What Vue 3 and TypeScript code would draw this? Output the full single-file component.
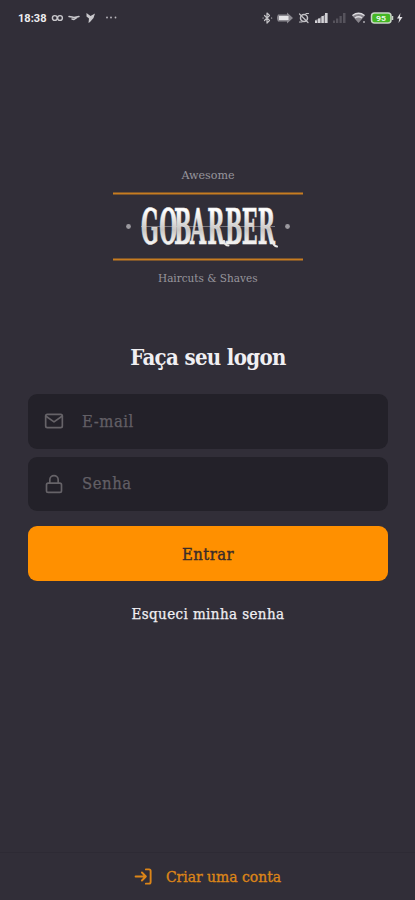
<script setup lang="ts">
import { ref } from 'vue'

const email = ref<string>('')
const password = ref<string>('')
</script>

<template>
  <div class="screen">
    <header class="status">
      <svg width="415" height="36" viewBox="0 0 415 36" aria-hidden="true">
        <text class="clock" x="18" y="22" textLength="28.5" lengthAdjust="spacingAndGlyphs">18:38</text>
        <g fill="none" stroke="#c9c8cc" stroke-width="1.4" stroke-linecap="round" stroke-linejoin="round">
          <circle cx="54.800" cy="18" r="2.400" /><circle cx="60" cy="18" r="2.400" />
          <path d="M69 16.500l3 .5 2 .5 5-1M72 19l2 .5 3-2" stroke-width="1.500" />
        </g>
        <path d="M86.500 13l4 3 4.500-2.500-1.500 4.500-3.500 4-1.500 1 .5-4.500-2.500-2z" fill="#c9c8cc" />
        <g fill="#bbb9be"><circle cx="107" cy="17.500" r=".9" /><circle cx="111" cy="17.500" r=".9" /><circle cx="115.500" cy="17.500" r=".9" /></g>
        <g fill="none" stroke="#c3c2c6" stroke-width="1.200" stroke-linecap="round" stroke-linejoin="round">
          <path d="M264.500 15.500l5 5-2.500 2.500V13l2.500 2.500-5 5M263 18h.2M271.500 18h.2" />
          <circle cx="304" cy="18" r="3.500" stroke-width="1.500" />
          <path d="M299.500 14l8.500 8.500M299.500 22h2.500M306 13.500h2.500" />
        </g>
        <path d="M278 14.500h9v-2l6 5.500-6 5.500v-2h-9q-2-3.500 0-7z" fill="#8b8990" />
        <path d="M279 16h9.500v4H279z" fill="#e4e3e6" />
        <path d="M315 23v-3l3-1 9.500-6v10z" fill="#77747d" />
        <path d="M315 20.500h2V23h-2zM318 18.500h2.300V23H318zM321.500 16h2.300v7h-2.300zM325 13h2.500v10H325z" fill="#d2d1d5" />
        <path d="M333 20.500h2V23h-2zM336 18.500h2.300V23H336zM339.500 16h2.300v7h-2.300zM343 13h2.500v10H343z" fill="#56535c" />
        <path d="M352 15.500q6.500-5 13 0L358.500 23z" fill="#88858c" />
        <path d="M352.500 15.500q6-4.500 12 0M355 18q3.500-2.500 7 0" fill="none" stroke="#dddce0" stroke-width="1.300" />
        <circle cx="364" cy="22" r="1" fill="#aaa8ae" />
        <rect x="371.500" y="13" width="19.500" height="10" rx="3" fill="#44b724" stroke="#c8d5c5" stroke-width="1.500" />
        <path d="M392.500 16v4" stroke="#c8d5c5" stroke-width="1.500" />
        <text class="charge" x="376" y="21" textLength="10" lengthAdjust="spacingAndGlyphs">95</text>
        <path d="M400.500 13l-3.500 5.500h2.300L398.500 23l4-6h-2.600z" fill="#e0dfe2" />
      </svg>
    </header>

    <main>
      <svg class="logo" width="190" height="122" viewBox="0 0 190 122" role="img" aria-label="GoBarber">
        <defs>
          <linearGradient id="silver" x1="0" y1="0" x2="0" y2="1">
            <stop offset="0.2" stop-color="#fff" />
            <stop offset=".55" stop-color="#c9c6c4" />
            <stop offset=".8" stop-color="#f6f5f4" />
          </linearGradient>
        </defs>
        <text class="tag" x="68.500" y="13" textLength="53" lengthAdjust="spacingAndGlyphs">Awesome</text>
        <path d="M0 27.500h190M0 93.500h190" stroke="#c77c20" stroke-width="2" />
        <circle cx="15.500" cy="60.500" r="2.400" fill="#9b999f" />
        <circle cx="174.500" cy="60.500" r="2.400" fill="#9b999f" />
        <path d="M28 60.500h134" stroke="#8f8c90" stroke-width=".8" />
        <text class="brand" transform="translate(28 77.500) scale(.48 1)" x="0 38 69 102 138 175 210 243">GOBARBER</text>
        <path d="M111 75q1 4.500 4.500 4.500M159.500 75q1 5 4.500 5.500" fill="none" stroke="#e9e8e7" stroke-width="2" stroke-linecap="round" />
        <text class="tag" x="45" y="116" textLength="99.500" lengthAdjust="spacingAndGlyphs">Haircuts &amp; Shaves</text>
      </svg>

      <h1>Faça seu logon</h1>

      <form @submit.prevent>
        <label class="field">
          <svg width="20" height="20" viewBox="0 0 24 24" class="icon">
            <path d="M4 4h16a2 2 0 0 1 2 2v12a2 2 0 0 1-2 2H4a2 2 0 0 1-2-2V6a2 2 0 0 1 2-2z" />
            <path d="M22 6l-10 7L2 6" />
          </svg>
          <input v-model="email" class="email" type="email" placeholder="E-mail" />
        </label>
        <label class="field">
          <svg width="20" height="20" viewBox="0 0 24 24" class="icon">
            <rect x="3" y="11" width="18" height="11" rx="2" />
            <path d="M7 11V7a5 5 0 0 1 10 0v4" />
          </svg>
          <input v-model="password" class="password" type="password" placeholder="Senha" />
        </label>
        <button class="enter" type="submit">Entrar</button>
      </form>

      <a class="forgot"><span>Esqueci minha senha</span></a>
    </main>

    <footer>
      <svg width="19" height="19" viewBox="0 0 24 24" class="icon login">
        <path d="M15 3h4a2 2 0 0 1 2 2v14a2 2 0 0 1-2 2h-4M10 17l5-5-5-5M15 12H2" />
      </svg>
      <span>Criar uma conta</span>
    </footer>
  </div>
</template>

<style>
body {
  background: #312e38;
}
</style>

<style scoped>
.screen {
  box-sizing: border-box;
  width: 415px;
  height: 900px;
  display: flex;
  flex-direction: column;
  overflow: hidden;
  background: #312e38;
  color: #f0eff2;
  font-family: "Roboto Slab", "DejaVu Serif Condensed", "DejaVu Serif", serif;
  font-stretch: condensed;
}
.status {
  height: 36px;
}
.status svg {
  display: block;
}
.clock {
  font: bold 11.5px Roboto, sans-serif;
  fill: #eeedf0;
}
.charge {
  font: bold 8px Roboto, sans-serif;
  fill: #e8f6e5;
}
main {
  flex: 1;
  display: flex;
  flex-direction: column;
  align-items: center;
  padding: 130px 27px 0 28px;
}
.logo {
  display: block;
  overflow: visible;
}
.tag {
  font-size: 11px;
  fill: #98969d;
}
.brand {
  font-size: 48px;
  font-weight: bold;
  fill: url(#silver);
  stroke: #eeedec;
  stroke-width: 0.5px;
}
h1 {
  margin: 52px 0 20px;
  height: 34px;
  line-height: 34px;
  font-size: 22px;
  font-weight: bold;
  letter-spacing: -0.64px;
  white-space: nowrap;
}
form {
  width: 100%;
  display: flex;
  flex-direction: column;
}
.field {
  height: 54.5px;
  margin-bottom: 8px;
  padding: 0 16px;
  display: flex;
  align-items: center;
  gap: 18px;
  box-sizing: border-box;
  border-radius: 9px;
  background: #232129;
}
.icon {
  flex: none;
  fill: none;
  stroke: #666368;
  stroke-width: 2;
  stroke-linecap: round;
  stroke-linejoin: round;
}
input {
  flex: 1;
  min-width: 0;
  padding: 0;
  border: 0;
  outline: 0;
  background: none;
  color: #f4ede8;
  font: inherit;
  font-size: 16.5px;
  letter-spacing: 0.55px;
}
input::placeholder {
  color: #625f65;
  opacity: 1;
  -webkit-text-stroke: 0.25px #625f65;
}
.enter {
  height: 55px;
  margin-top: 7px;
  padding-top: 3px;
  border: 0;
  border-radius: 9px;
  background: #ff9000;
  color: #3b2c29;
  font: inherit;
  font-size: 16.5px;
  letter-spacing: 0.4px;
  -webkit-text-stroke: 0.4px #3b2c29;
}
.forgot {
  margin-top: 21px;
  line-height: 24px;
  font-size: 15px;
  letter-spacing: 0.4px;
  white-space: nowrap;
  -webkit-text-stroke: 0.25px #f0eff2;
}
footer {
  height: 48px;
  box-sizing: border-box;
  border-top: 1px solid #2d2a34;
  display: flex;
  align-items: center;
  justify-content: center;
  gap: 13px;
  color: #dc8518;
  font-size: 15.5px;
  white-space: nowrap;
  -webkit-text-stroke: 0.35px #dc8518;
}
.login {
  stroke: #dc8518;
  stroke-width: 2.4;
}
</style>
